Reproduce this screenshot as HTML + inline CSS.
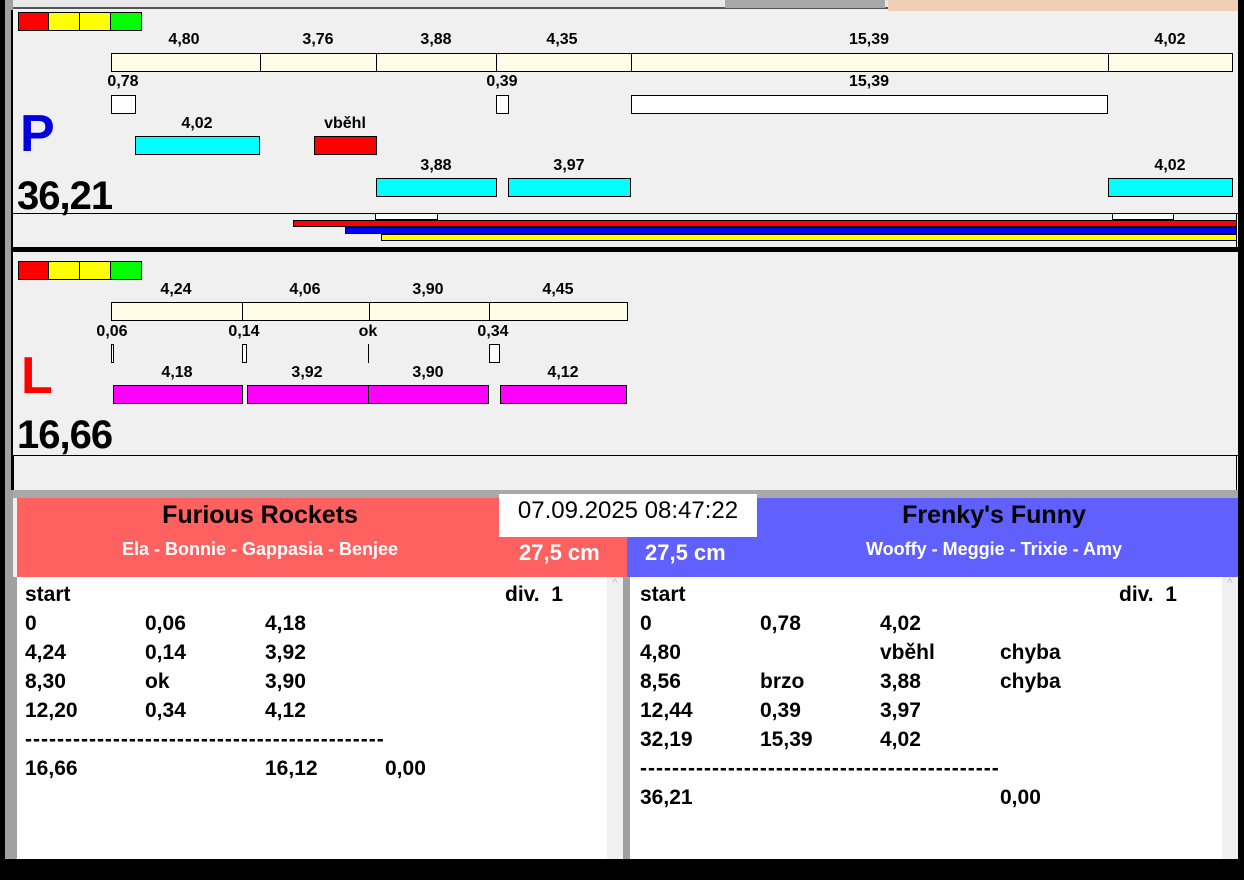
<!DOCTYPE html>
<html><head><meta charset="utf-8"><style>
*{margin:0;padding:0;box-sizing:border-box}
body{width:1244px;height:880px;position:relative;overflow:hidden;background:#f0f0f0;font-family:"Liberation Sans",Arial,sans-serif}
.a{position:absolute}
.b{position:absolute;border:1px solid #000}
.l{position:absolute;font-weight:bold;font-size:16px;text-align:center;line-height:18px;width:120px}
.t{position:absolute;font-weight:bold;font-size:21px;line-height:24px}
</style></head><body>
<div class="a" style="left:0;top:0;width:5px;height:880px;background:#000"></div>
<div class="a" style="left:5px;top:0;width:8px;height:860px;background:#a0a0a0"></div>
<div class="a" style="left:11px;top:10px;width:2px;height:480px;background:#000"></div>
<div class="a" style="left:1238px;top:0;width:6px;height:880px;background:#000"></div>
<div class="a" style="left:13px;top:0;width:875px;height:9px;background:#e8e8e8;border-bottom:2px solid #555"></div>
<div class="a" style="left:725px;top:0;width:160px;height:8px;background:#a8a8a8"></div>
<div class="a" style="left:888px;top:0;width:350px;height:11px;background:#f0d0b4"></div>

<!-- P panel -->
<div class="b" style="left:18px;top:12px;width:31px;height:19px;background:#f00"></div>
<div class="b" style="left:48px;top:12px;width:32px;height:19px;background:#ff0"></div>
<div class="b" style="left:79px;top:12px;width:32px;height:19px;background:#ff0"></div>
<div class="b" style="left:110px;top:12px;width:32px;height:19px;background:#0f0"></div>

<div class="l" style="left:124px;top:31px">4,80</div>
<div class="l" style="left:258px;top:31px">3,76</div>
<div class="l" style="left:376px;top:31px">3,88</div>
<div class="l" style="left:502px;top:31px">4,35</div>
<div class="l" style="left:809px;top:31px">15,39</div>
<div class="l" style="left:1110px;top:31px">4,02</div>
<div class="b" style="left:111px;top:53px;width:150px;height:19px;background:#fffde8"></div>
<div class="b" style="left:260px;top:53px;width:117px;height:19px;background:#fffde8"></div>
<div class="b" style="left:376px;top:53px;width:121px;height:19px;background:#fffde8"></div>
<div class="b" style="left:496px;top:53px;width:136px;height:19px;background:#fffde8"></div>
<div class="b" style="left:631px;top:53px;width:478px;height:19px;background:#fffde8"></div>
<div class="b" style="left:1108px;top:53px;width:125px;height:19px;background:#fffde8"></div>

<div class="l" style="left:63px;top:73px">0,78</div>
<div class="l" style="left:442px;top:73px">0,39</div>
<div class="l" style="left:809px;top:73px">15,39</div>
<div class="b" style="left:111px;top:95px;width:25px;height:19px;background:#fff"></div>
<div class="b" style="left:496px;top:95px;width:13px;height:19px;background:#fff"></div>
<div class="b" style="left:631px;top:95px;width:477px;height:19px;background:#fff"></div>

<div class="a" style="left:20px;top:104px;font-size:52px;font-weight:bold;color:#0000e0;line-height:60px">P</div>
<div class="l" style="left:137px;top:115px">4,02</div>
<div class="l" style="left:285px;top:115px">vběhl</div>
<div class="b" style="left:135px;top:136px;width:125px;height:19px;background:#0ff"></div>
<div class="b" style="left:314px;top:136px;width:63px;height:19px;background:#f00"></div>

<div class="l" style="left:376px;top:157px">3,88</div>
<div class="l" style="left:509px;top:157px">3,97</div>
<div class="l" style="left:1110px;top:157px">4,02</div>
<div class="b" style="left:376px;top:178px;width:121px;height:19px;background:#0ff"></div>
<div class="b" style="left:508px;top:178px;width:123px;height:19px;background:#0ff"></div>
<div class="b" style="left:1108px;top:178px;width:125px;height:19px;background:#0ff"></div>
<div class="a" style="left:17px;top:173px;font-size:40px;font-weight:bold;line-height:46px;letter-spacing:-1px">36,21</div>

<div class="a" style="left:13px;top:213px;width:1225px;height:1px;background:#000"></div>
<div class="a" style="left:1236px;top:213px;width:1px;height:34px;background:#000"></div>
<div class="b" style="left:375px;top:213px;width:63px;height:7px;background:#fff"></div>
<div class="b" style="left:1112px;top:213px;width:62px;height:7px;background:#fff"></div>
<div class="b" style="left:293px;top:220px;width:944px;height:7px;background:#f00"></div>
<div class="b" style="left:345px;top:227px;width:892px;height:7px;background:#00f"></div>
<div class="b" style="left:381px;top:234px;width:856px;height:7px;background:#ff0"></div>
<div class="a" style="left:13px;top:247px;width:1225px;height:5px;background:#000"></div>

<!-- L panel -->
<div class="b" style="left:18px;top:261px;width:31px;height:19px;background:#f00"></div>
<div class="b" style="left:48px;top:261px;width:32px;height:19px;background:#ff0"></div>
<div class="b" style="left:79px;top:261px;width:32px;height:19px;background:#ff0"></div>
<div class="b" style="left:110px;top:261px;width:32px;height:19px;background:#0f0"></div>

<div class="l" style="left:116px;top:281px">4,24</div>
<div class="l" style="left:245px;top:281px">4,06</div>
<div class="l" style="left:368px;top:281px">3,90</div>
<div class="l" style="left:498px;top:281px">4,45</div>
<div class="b" style="left:111px;top:302px;width:132px;height:19px;background:#fffde8"></div>
<div class="b" style="left:242px;top:302px;width:128px;height:19px;background:#fffde8"></div>
<div class="b" style="left:369px;top:302px;width:121px;height:19px;background:#fffde8"></div>
<div class="b" style="left:489px;top:302px;width:139px;height:19px;background:#fffde8"></div>

<div class="l" style="left:52px;top:323px">0,06</div>
<div class="l" style="left:184px;top:323px">0,14</div>
<div class="l" style="left:308px;top:323px">ok</div>
<div class="l" style="left:433px;top:323px">0,34</div>
<div class="b" style="left:111px;top:344px;width:3px;height:19px;background:#fff"></div>
<div class="b" style="left:242px;top:344px;width:5px;height:19px;background:#fff"></div>
<div class="a" style="left:368px;top:344px;width:1px;height:19px;background:#000"></div>
<div class="b" style="left:489px;top:344px;width:11px;height:19px;background:#fff"></div>

<div class="a" style="left:21px;top:346px;font-size:52px;font-weight:bold;color:#f00;line-height:60px">L</div>
<div class="l" style="left:117px;top:364px">4,18</div>
<div class="l" style="left:247px;top:364px">3,92</div>
<div class="l" style="left:368px;top:364px">3,90</div>
<div class="l" style="left:503px;top:364px">4,12</div>
<div class="b" style="left:113px;top:385px;width:130px;height:19px;background:#f0f"></div>
<div class="b" style="left:247px;top:385px;width:122px;height:19px;background:#f0f"></div>
<div class="b" style="left:368px;top:385px;width:121px;height:19px;background:#f0f"></div>
<div class="b" style="left:500px;top:385px;width:127px;height:19px;background:#f0f"></div>
<div class="a" style="left:17px;top:412px;font-size:40px;font-weight:bold;line-height:46px;letter-spacing:-1px">16,66</div>
<div class="a" style="left:13px;top:455px;width:1225px;height:1px;background:#000"></div>
<div class="a" style="left:13px;top:455px;width:1px;height:35px;background:#000"></div>
<div class="a" style="left:1236px;top:455px;width:1px;height:35px;background:#000"></div>

<!-- bottom -->
<div class="a" style="left:13px;top:490px;width:1225px;height:8px;background:#a8a8a8"></div>
<div class="a" style="left:17px;top:498px;width:610px;height:79px;background:#ff6060"></div>
<div class="a" style="left:627px;top:498px;width:611px;height:79px;background:#6060ff"></div>
<div class="a" style="left:499px;top:494px;width:258px;height:43px;background:#fff;font-size:24px;line-height:34px;text-align:center">07.09.2025 08:47:22</div>
<div class="a" style="left:60px;top:500px;width:400px;text-align:center;font-size:25px;font-weight:bold;line-height:30px">Furious Rockets</div>
<div class="a" style="left:60px;top:538px;width:400px;text-align:center;font-size:18px;font-weight:bold;color:#fff;line-height:22px">Ela - Bonnie - Gappasia - Benjee</div>
<div class="a" style="left:519px;top:540px;font-size:22px;font-weight:bold;color:#fff;line-height:26px">27,5 cm</div>
<div class="a" style="left:645px;top:540px;font-size:22px;font-weight:bold;color:#fff;line-height:26px">27,5 cm</div>
<div class="a" style="left:794px;top:500px;width:400px;text-align:center;font-size:25px;font-weight:bold;line-height:30px">Frenky's Funny</div>
<div class="a" style="left:794px;top:538px;width:400px;text-align:center;font-size:18px;font-weight:bold;color:#fff;line-height:22px">Wooffy - Meggie - Trixie - Amy</div>

<div class="a" style="left:13px;top:577px;width:4px;height:282px;background:#a0a0a0"></div>
<div class="a" style="left:17px;top:577px;width:590px;height:282px;background:#fff"></div>
<div class="a" style="left:607px;top:577px;width:16px;height:282px;background:#f0f0f0;color:#bbb;font-size:11px;text-align:center">^</div>
<div class="a" style="left:623px;top:577px;width:7px;height:282px;background:#a0a0a0"></div>
<div class="a" style="left:630px;top:577px;width:592px;height:282px;background:#fff"></div>
<div class="a" style="left:1222px;top:577px;width:16px;height:282px;background:#f0f0f0;color:#bbb;font-size:11px;text-align:center">^</div>
<div class="a" style="left:0;top:859px;width:1244px;height:21px;background:#000"></div>

<div class="t" style="left:25px;top:583px">start</div><div class="t" style="left:505px;top:583px">div.&nbsp; 1</div>
<div class="t" style="left:25px;top:612px">0</div><div class="t" style="left:145px;top:612px">0,06</div><div class="t" style="left:265px;top:612px">4,18</div>
<div class="t" style="left:25px;top:641px">4,24</div><div class="t" style="left:145px;top:641px">0,14</div><div class="t" style="left:265px;top:641px">3,92</div>
<div class="t" style="left:25px;top:670px">8,30</div><div class="t" style="left:145px;top:670px">ok</div><div class="t" style="left:265px;top:670px">3,90</div>
<div class="t" style="left:25px;top:699px">12,20</div><div class="t" style="left:145px;top:699px">0,34</div><div class="t" style="left:265px;top:699px">4,12</div>
<div class="t" style="left:25px;top:728px;letter-spacing:1px">---------------------------------------------</div>
<div class="t" style="left:25px;top:757px">16,66</div><div class="t" style="left:265px;top:757px">16,12</div><div class="t" style="left:385px;top:757px">0,00</div>

<div class="t" style="left:640px;top:583px">start</div><div class="t" style="left:1119px;top:583px">div.&nbsp; 1</div>
<div class="t" style="left:640px;top:612px">0</div><div class="t" style="left:760px;top:612px">0,78</div><div class="t" style="left:880px;top:612px">4,02</div>
<div class="t" style="left:640px;top:641px">4,80</div><div class="t" style="left:880px;top:641px">vběhl</div><div class="t" style="left:1000px;top:641px">chyba</div>
<div class="t" style="left:640px;top:670px">8,56</div><div class="t" style="left:760px;top:670px">brzo</div><div class="t" style="left:880px;top:670px">3,88</div><div class="t" style="left:1000px;top:670px">chyba</div>
<div class="t" style="left:640px;top:699px">12,44</div><div class="t" style="left:760px;top:699px">0,39</div><div class="t" style="left:880px;top:699px">3,97</div>
<div class="t" style="left:640px;top:728px">32,19</div><div class="t" style="left:760px;top:728px">15,39</div><div class="t" style="left:880px;top:728px">4,02</div>
<div class="t" style="left:640px;top:757px;letter-spacing:1px">---------------------------------------------</div>
<div class="t" style="left:640px;top:786px">36,21</div><div class="t" style="left:1000px;top:786px">0,00</div>
</body></html>
